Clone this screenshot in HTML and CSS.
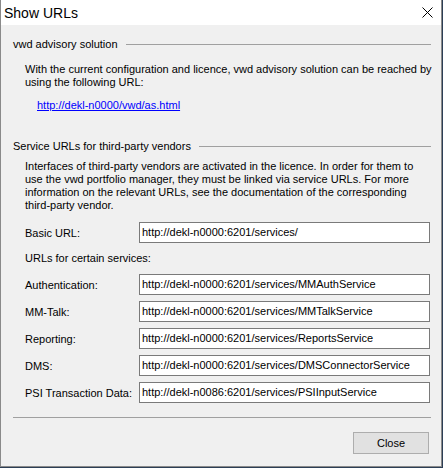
FILE: index.html
```html
<!DOCTYPE html>
<html lang="en">
<head>
    <meta charset="UTF-8">
    <title>Show URLs</title>
    <link rel="stylesheet" href="styles.css">
</head>
<body>
    <div class="window">
        <div class="titlebar">
            <span class="title">Show URLs</span>
            <span class="close-x">
                <svg width="11" height="11" viewBox="0 0 11 11">
                    <path d="M0.5 0.5 L10.5 10.5 M10.5 0.5 L0.5 10.5" stroke="#000" stroke-width="1" fill="none"/>
                </svg>
            </span>
        </div>
        <div class="content">
            <div class="group-header first">
                <span>vwd advisory solution</span>
                <div class="rule"></div>
            </div>
            <p class="text block1">With the current configuration and licence, vwd advisory solution can be reached by<br>using the following URL:</p>
            <a class="link" href="#">http://dekl-n0000/vwd/as.html</a>

            <div class="group-header second">
                <span>Service URLs for third-party vendors</span>
                <div class="rule"></div>
            </div>
            <p class="text block2">Interfaces of third-party vendors are activated in the licence. In order for them to<br>use the vwd portfolio manager, they must be linked via service URLs. For more<br>information on the relevant URLs, see the documentation of the corresponding<br>third-party vendor.</p>

            <div class="field basic">
                <label>Basic URL:</label>
                <div class="input">http://dekl-n0000:6201/services/</div>
            </div>
            <p class="text sub">URLs for certain services:</p>

            <div class="fields">
                <div class="field">
                    <label>Authentication:</label>
                    <div class="input">http://dekl-n0000:6201/services/MMAuthService</div>
                </div>
                <div class="field">
                    <label>MM-Talk:</label>
                    <div class="input">http://dekl-n0000:6201/services/MMTalkService</div>
                </div>
                <div class="field">
                    <label>Reporting:</label>
                    <div class="input">http://dekl-n0000:6201/services/ReportsService</div>
                </div>
                <div class="field">
                    <label>DMS:</label>
                    <div class="input">http://dekl-n0000:6201/services/DMSConnectorService</div>
                </div>
                <div class="field">
                    <label>PSI Transaction Data:</label>
                    <div class="input">http://dekl-n0086:6201/services/PSIInputService</div>
                </div>
            </div>

            <div class="separator"></div>
            <div class="buttons">
                <button type="button">Close</button>
            </div>
        </div>
    </div>
</body>
</html>
```

FILE: styles.css
```css
html {
    background-color: #2c3e55;
}
body {
    margin: 0;
    padding: 0;
    font-family: "Liberation Sans", Arial, sans-serif;
    font-size: 11px;
    color: #000;
}
.window {
    width: 442px;
    height: 467px;
    box-sizing: border-box;
    background-color: #f0f0f0;
    border: 1px solid #8a8a8a;
    border-top: none;
    display: flex;
    flex-direction: column;
}
.titlebar {
    height: 25px;
    background-color: #fff;
    display: flex;
    align-items: center;
    padding-left: 3px;
    flex-shrink: 0;
}
.title {
    font-size: 14px;
    flex: 1;
    margin-top: 1px;
}
.close-x {
    width: 11px;
    height: 11px;
    margin-right: 8px;
    display: flex;
}
.content {
    padding: 0 10px 0 12px;
    display: flex;
    flex-direction: column;
}
.group-header {
    display: flex;
    align-items: center;
    line-height: 13px;
}
.group-header .rule {
    flex: 1;
    height: 1px;
    background-color: #a0a0a0;
    margin-left: 8px;
    margin-top: -1px;
}
.group-header.first {
    margin-top: 13px;
}
.group-header.second {
    margin-top: 28px;
}
.text {
    margin: 0 0 0 12px;
    line-height: 13px;
    white-space: nowrap;
}
.block1 {
    margin-top: 12px;
}
.block2 {
    margin-top: 7px;
}
.link {
    margin: 10px 0 0 24px;
    line-height: 13px;
    color: #0000ff;
    align-self: flex-start;
}
.field {
    display: flex;
    align-items: center;
    margin-left: 12px;
    height: 21px;
}
.field label {
    width: 114px;
    flex-shrink: 0;
}
.input {
    width: 291px;
    height: 21px;
    box-sizing: border-box;
    border: 1px solid #7a7a7a;
    background-color: #fff;
    padding: 0 2px;
    line-height: 19px;
    white-space: nowrap;
}
.basic {
    margin-top: 10px;
}
.sub {
    margin-top: 9px;
}
.fields {
    display: flex;
    flex-direction: column;
    gap: 6px;
    margin-top: 9px;
}
.separator {
    height: 1px;
    background-color: #a0a0a0;
    margin-top: 14px;
}
.buttons {
    display: flex;
    justify-content: flex-end;
    margin-top: 14px;
    padding-right: 2px;
}
.buttons button {
    width: 76px;
    height: 22px;
    font-family: "Liberation Sans", Arial, sans-serif;
    font-size: 11px;
    color: #000;
    background-color: #e1e1e1;
    border: 1px solid #adadad;
    padding: 0;
}
```
